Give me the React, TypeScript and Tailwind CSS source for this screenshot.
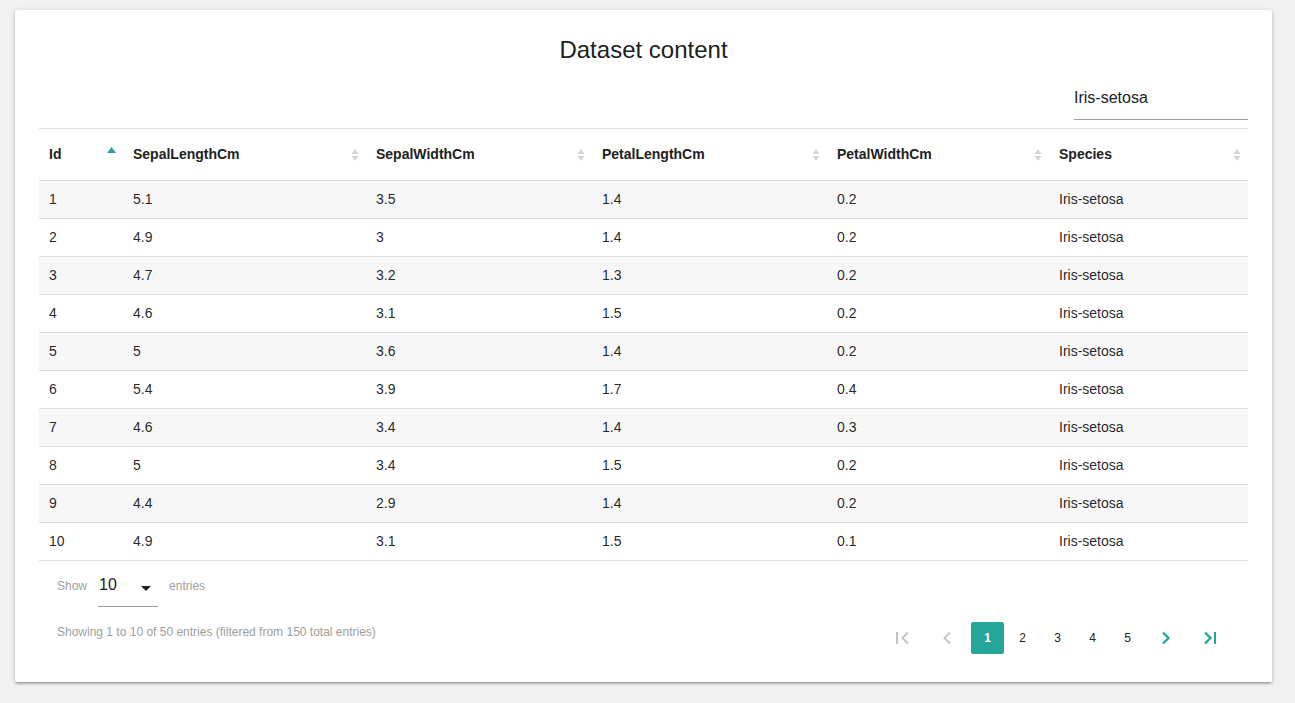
import { ReactNode } from "react";

const columns = ["Id", "SepalLengthCm", "SepalWidthCm", "PetalLengthCm", "PetalWidthCm", "Species"];

const rows: (string | number)[][] = [
  [1, "5.1", "3.5", "1.4", "0.2"],
  [2, "4.9", "3", "1.4", "0.2"],
  [3, "4.7", "3.2", "1.3", "0.2"],
  [4, "4.6", "3.1", "1.5", "0.2"],
  [5, "5", "3.6", "1.4", "0.2"],
  [6, "5.4", "3.9", "1.7", "0.4"],
  [7, "4.6", "3.4", "1.4", "0.3"],
  [8, "5", "3.4", "1.5", "0.2"],
  [9, "4.4", "2.9", "1.4", "0.2"],
  [10, "4.9", "3.1", "1.5", "0.1"],
];

const grid = "grid grid-cols-[84px_243px_226px_235px_222px_199px]";

function SortIcon({ active }: { active?: boolean }) {
  if (active) {
    return (
      <svg width="9" height="12" viewBox="0 0 9 12" className="mb-[3px]">
        <polygon points="4.5,0 9,6 0,6" fill="#26a69a" />
      </svg>
    );
  }
  return (
    <svg width="8" height="12" viewBox="0 0 8 12">
      <polygon points="4,0 7.5,5 0.5,5" fill="#d6d6d6" />
      <polygon points="0.5,7 7.5,7 4,12" fill="#d6d6d6" />
    </svg>
  );
}

function PageIcon({ kind, disabled }: { kind: "first" | "prev" | "next" | "last"; disabled?: boolean }) {
  const color = disabled ? "#c4c4c4" : "#26a69a";
  return (
    <svg width="16" height="14" viewBox="0 0 16 14" fill="none" stroke={color} strokeWidth="2">
      {kind === "first" && (
        <>
          <line x1="2" y1="1" x2="2" y2="13" />
          <polyline points="13,1.5 7.5,7 13,12.5" />
        </>
      )}
      {kind === "prev" && <polyline points="11,1.5 5.5,7 11,12.5" />}
      {kind === "next" && <polyline points="5,1.5 10.5,7 5,12.5" strokeWidth="2.4" />}
      {kind === "last" && (
        <>
          <polyline points="3,1.5 8.5,7 3,12.5" strokeWidth="2.4" />
          <line x1="13" y1="1" x2="13" y2="13" />
        </>
      )}
    </svg>
  );
}

function IconButton({ children }: { children: ReactNode }) {
  return <div className="flex h-[32px] w-[44px] items-center justify-center">{children}</div>;
}

export default function App() {
  return (
    <div className="min-h-[703px] bg-[#f2f2f2] pt-[10px] pl-[15px] font-['Liberation_Sans',Arial,sans-serif] text-[#212121]">
      <div className="h-[672px] w-[1257px] rounded-[2px] bg-white px-[24px] pt-[24px] shadow-[0_2px_2px_0_rgba(0,0,0,0.14),0_3px_1px_-2px_rgba(0,0,0,0.12),0_1px_5px_0_rgba(0,0,0,0.2)]">
        <h1 className="h-[32px] text-center text-[24px] leading-[32px]">Dataset content</h1>

        <div className="mt-[14px] flex justify-end">
          <div className="h-[40px] w-[174px] border-b border-[#9e9e9e] pt-[8px] text-[16px] leading-[20px]">Iris-setosa</div>
        </div>

        <div className="mt-[8px] text-[14px]">
          <div className={`${grid} h-[53px] border-y border-[#dddddd]`}>
            {columns.map((col, i) => (
              <div key={col} className="flex items-center justify-between pr-[7px] pl-[10px] font-bold">
                <span>{col}</span>
                <SortIcon active={i === 0} />
              </div>
            ))}
          </div>
          {rows.map((row, r) => (
            <div key={r} className={`${grid} h-[38px] border-b border-[#dddddd] ${r % 2 === 0 ? "bg-[#f7f7f7]" : "bg-white"}`}>
              {[...row, "Iris-setosa"].map((cell, c) => (
                <div key={c} className="flex items-center pl-[10px] text-[rgba(0,0,0,0.87)]">
                  {cell}
                </div>
              ))}
            </div>
          ))}
        </div>

        <div className="px-[18px]">
          <div className="flex items-start gap-[11px] text-[12px] text-[#9e9e9e]">
            <span className="mt-[17px] leading-[16px]">Show</span>
            <div className="mt-[10px] flex h-[36px] w-[60px] items-start justify-between border-b border-[#9e9e9e] pt-[4px] pr-[7px] pl-[1px]">
              <span className="text-[16px] leading-[20px] text-[#212121]">10</span>
              <svg width="10" height="5" viewBox="0 0 10 5" className="mt-[11px]">
                <polygon points="0,0 10,0 5,5" fill="#212121" />
              </svg>
            </div>
            <span className="mt-[17px] leading-[16px]">entries</span>
          </div>

          <div className="flex items-start justify-between">
            <span className="mt-[17px] text-[12px] leading-[16px] text-[#9e9e9e]">
              Showing 1 to 10 of 50 entries (filtered from 150 total entries)
            </span>
            <div className="mt-[15px] mr-[-2px] flex items-center text-[12px]">
              <IconButton>
                <PageIcon kind="first" disabled />
              </IconButton>
              <IconButton>
                <PageIcon kind="prev" disabled />
              </IconButton>
              {[1, 2, 3, 4, 5].map((p) => (
                <div
                  key={p}
                  className={`ml-[2px] flex h-[32px] w-[33px] items-center justify-center rounded-[2px] ${
                    p === 1 ? "bg-[#26a69a] font-bold text-white" : "text-[#212121]"
                  }`}
                >
                  {p}
                </div>
              ))}
              <IconButton>
                <PageIcon kind="next" />
              </IconButton>
              <IconButton>
                <PageIcon kind="last" />
              </IconButton>
            </div>
          </div>
        </div>
      </div>
    </div>
  );
}
